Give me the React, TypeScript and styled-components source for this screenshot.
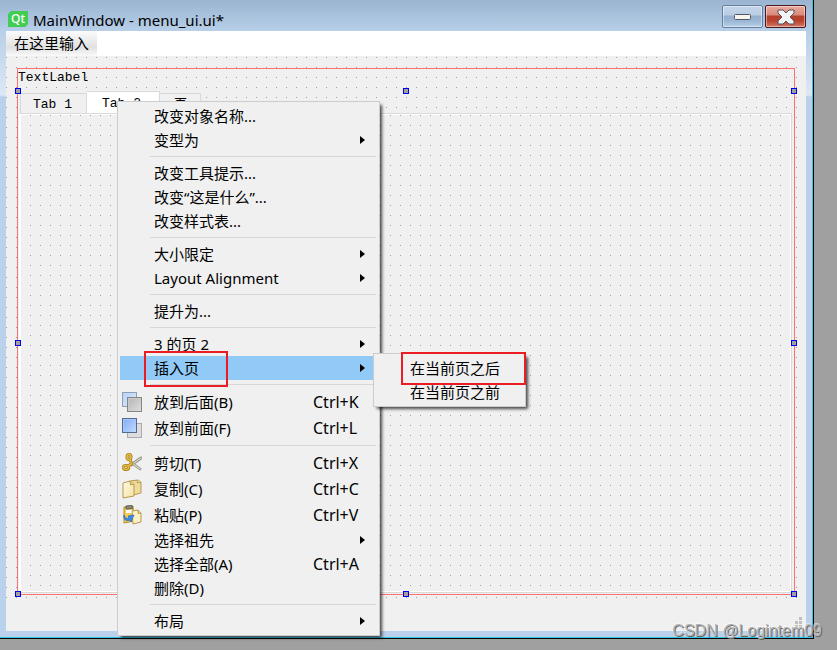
import React from "react";
import styled, { createGlobalStyle, css } from "styled-components";

const Global = createGlobalStyle`
  * { box-sizing: border-box; }
  body { margin: 0; font-family: "Noto Sans", "Noto Sans CJK SC", sans-serif; font-size: 15px; color: #000; }
  button, input { font: inherit; color: inherit; border: 0; padding: 0; margin: 0; background: none; text-align: left; }
`;

const Desktop = styled.div`
  display: flex;
  position: relative;
  min-height: 100vh;
  padding: 0 23px 11px 0;
  background: #a0a0a0;
  overflow: hidden;
`;

const Frame = styled.main`
  flex: 1;
  display: flex;
  flex-direction: column;
  padding: 0 7px 7px 6px;
  border: 1px solid #000;
  border-width: 0 1px 1px 0;
  box-shadow: inset -1px -1px 0 #30c4e8;
  background: linear-gradient(#9ab4d1 0, #b7cfe8 31px, #dce8f5 95px, #b9d1ea 97px);
`;

const TitleBar = styled.header`
  display: flex;
  align-items: flex-start;
  height: 31px;
  padding-top: 5px;
`;

const QtIcon = styled.svg`
  width: 20px;
  height: 16px;
  margin: 6px 5px 0 2px;
`;

const Title = styled.h1`
  flex: 1;
  margin: 3px 0 0;
  font-size: 15px;
  font-weight: 400;
  line-height: 24px;
`;

const WindowButton = styled.button<{ $close?: boolean }>`
  display: grid;
  place-items: center;
  width: 41px;
  height: 23px;
  margin-left: 2px;
  border: 1px solid ${(p) => (p.$close ? "#4a1520" : "#64809f")};
  border-radius: 2px;
  box-shadow: inset 0 0 0 1px rgba(255, 255, 255, 0.45);
  background: ${(p) =>
    p.$close
      ? "linear-gradient(#e9a99c 0, #d98a7c 9px, #b5412c 10px, #b84430 15px, #d47a66 100%)"
      : "linear-gradient(#c3d5e9 0, #b9cde3 9px, #94b0ce 10px, #9bb7d5 15px, #b7d0e9 100%)"};
`;

const MenuBar = styled.nav`
  display: flex;
  height: 25px;
  background: #fff;
`;

const MenuBarItem = styled.button`
  width: 91px;
  padding-left: 8px;
  line-height: 25px;
  background: linear-gradient(#fbfbfb, #e1e1e1 66%, #fafafa);
`;

const dots = (x: number, y: number) => css`
  background-color: #f0f0f0;
  background-image: conic-gradient(from 270deg at 1px 1px, #a0a0a0 90deg, transparent 0);
  background-size: 10px 10px;
  background-position: ${x}px ${y}px;
`;

const Canvas = styled.section`
  flex: 1;
  display: flex;
  flex-direction: column;
  padding: 12px 11px 3px;
  ${dots(0, 1)}
`;

const Selection = styled.div`
  flex: 1;
  display: flex;
  flex-direction: column;
  position: relative;
  border: 1px solid #ff7272;
`;

const Label = styled.div`
  height: 22px;
  font-family: "Liberation Mono", monospace;
  font-size: 13px;
  line-height: 18px;
`;

const Tabs = styled.div`
  display: flex;
  align-items: flex-end;
  height: 22px;
  padding-left: 2px;
`;

const Tab = styled.button<{ $active?: boolean }>`
  height: ${(p) => (p.$active ? 22 : 20)}px;
  padding: ${(p) => (p.$active ? "0 18px 0 15px" : "0 14px 0 12px")};
  border: 1px solid #d9d9d9;
  border-bottom: 0;
  background: ${(p) => (p.$active ? "#fff" : "#f0f0f0")};
  font-family: "Liberation Mono", "Noto Sans CJK SC", monospace;
  font-size: 13px;
  line-height: ${(p) => (p.$active ? 24 : 22)}px;
  & + & { border-left: 0; }
  &:last-child { padding: 0 13px 0 14px; }
`;

const TabPage = styled.div`
  flex: 1;
  margin: 0 2px 1px 1px;
  border: 1px solid #d9d9d9;
  border-left-color: #fff;
  box-shadow: inset 0 0 0 1px #fff;
  ${dots(0, 1)}
`;

const StatusBar = styled.footer`
  display: flex;
  justify-content: flex-end;
  align-items: flex-end;
  height: 33px;
  padding: 3px;
  background: #f0f0f0;
`;

const Handle = styled.i<{ $x: string; $y: string }>`
  position: absolute;
  left: ${(p) => p.$x};
  top: ${(p) => p.$y};
  width: 6px;
  height: 6px;
  margin: -3px;
  background: #a0a0a0;
  border: 1px solid #0000f0;
`;

const Popup = styled.div<{ $x: number; $y: number; $w: number }>`
  position: absolute;
  left: ${(p) => p.$x}px;
  top: ${(p) => p.$y}px;
  width: ${(p) => p.$w}px;
  padding: 2px;
  border: 1px solid #ccc;
  background: #f0f0f0;
  box-shadow: 3px 3px 3px -1px rgba(0, 0, 0, 0.7);
`;

const Item = styled.button<{ $tall?: boolean; $hot?: boolean }>`
  display: grid;
  grid-template-columns: 34px 1fr 64px;
  align-items: center;
  width: 100%;
  height: ${(p) => (p.$tall ? 26 : 24)}px;
  line-height: 24px;
  white-space: nowrap;
  background: ${(p) => (p.$hot ? "#91c9f7" : "transparent")};
`;

const ItemIcon = styled.span`
  display: flex;
  padding-left: 2px;
`;

const Keys = styled.span`
  font-size: 16px;
`;

const Arrow = styled.svg`
  width: 5px;
  height: 8px;
  justify-self: end;
  margin-right: 12px;
`;

const Separator = styled.hr`
  height: 1px;
  margin: 4px 1px 4px 30px;
  border: 0;
  background: #d7d7d7;
`;

const Mark = styled.div<{ $x: number; $y: number; $w: number; $h: number }>`
  position: absolute;
  left: ${(p) => p.$x}px;
  top: ${(p) => p.$y}px;
  width: ${(p) => p.$w}px;
  height: ${(p) => p.$h}px;
  border: 2px solid #ec1c24;
  pointer-events: none;
`;

const Watermark = styled.div`
  position: absolute;
  right: 15px;
  bottom: 7px;
  font-family: "Liberation Sans", sans-serif;
  font-size: 16px;
  line-height: 24px;
  color: #b4b4b4;
  text-shadow: 1px 1px 0 #666, -1px -1px 0 rgba(255, 255, 255, 0.5);
`;

const BackIcon = () => (
  <svg width="20" height="20" viewBox="0 0 20 20">
    <defs>
      <linearGradient id="sky" x2="1" y2="1"><stop stopColor="#b4d2fa" /><stop offset="1" stopColor="#dcebfc" /></linearGradient>
      <linearGradient id="grey" x2="1" y2="1"><stop stopColor="#b4b4b4" /><stop offset="1" stopColor="#dedede" /></linearGradient>
    </defs>
    <rect x=".5" y=".5" width="14" height="14" fill="url(#sky)" stroke="#8c9db4" />
    <rect x="5.5" y="5.5" width="14" height="14" fill="url(#grey)" stroke="#858585" />
    <path d="M6.5 18.5v-12h12" fill="none" stroke="#ccc" />
  </svg>
);

const FrontIcon = () => (
  <svg width="20" height="20" viewBox="0 0 20 20">
    <defs><linearGradient id="blue" x2="1" y2="1"><stop stopColor="#80abf4" /><stop offset="1" stopColor="#c4dcff" /></linearGradient></defs>
    <rect x="5.5" y="5.5" width="14" height="14" fill="#ddd" stroke="#aaa" />
    <rect x=".5" y=".5" width="14" height="14" fill="url(#blue)" stroke="#536a92" />
    <path d="M1.5 13.5v-12h12" fill="none" stroke="#a8c8fb" />
  </svg>
);

const CutIcon = () => (
  <svg width="20" height="20" viewBox="0 0 20 20" fill="none" strokeLinecap="round">
    <path d="m10 10 8 6M9 12l10-7" stroke="#85857a" strokeWidth="2.8" />
    <path d="m10 10 8 6M9 12l10-7" stroke="#dadace" strokeWidth="1.4" />
    <g stroke="#a07c26" strokeWidth="3"><ellipse cx="7" cy="4" rx="2" ry="2.6" /><path d="m8 7 2 4" /><ellipse cx="4" cy="14.5" rx="2.8" ry="2" /><path d="m6 13 3-2" /></g>
    <g stroke="#e6b93c" strokeWidth="1.6"><ellipse cx="7" cy="4" rx="2" ry="2.6" /><path d="m8 7 2 4" /><ellipse cx="4" cy="14.5" rx="2.8" ry="2" /><path d="m6 13 3-2" /></g>
  </svg>
);

const CopyIcon = () => (
  <svg width="20" height="20" viewBox="0 0 20 20" strokeLinejoin="round">
    <defs><linearGradient id="paper" x2="1" y2="1"><stop stopColor="#fffbe5" /><stop offset="1" stopColor="#f3e1a0" /></linearGradient></defs>
    <path d="m8 2 8-1 3 2v11l-8 2z" fill="#efdc9c" stroke="#b89850" />
    <path d="m1 4 7-2 4 3v12L1 19z" fill="url(#paper)" stroke="#b89850" />
    <path d="m8 2 .5 4L12 5" fill="#ead496" stroke="#b89850" />
    <path d="m15 1 .5 3L19 3" fill="#f8ebbe" stroke="#b89850" />
  </svg>
);

const PasteIcon = () => (
  <svg width="20" height="20" viewBox="0 0 20 20" strokeLinejoin="round">
    <path d="m2 2 9-1 1 15-10 2z" fill="#f0cb55" stroke="#b08c30" />
    <path d="m4 1 6-.5.5 3L4 4z" fill="#8b8c80" stroke="#5f6257" />
    <path d="M4 5h6v3H4z" fill="#fff" />
    <path d="m10 6 6-1 3 3v9l-8 2z" fill="#fbf0c2" stroke="#b49858" />
    <path d="m16 5 .3 3.5L19 8" fill="#ead496" stroke="#b49858" />
    <path d="M2 10c-1 4 2 7 6 5l1 2 3-7-6 1 1 2c-2 1-4 0-5-3z" fill="#3b8bed" stroke="#1b5cb8" strokeWidth=".6" />
  </svg>
);

type Entry = { text: string; keys?: string; sub?: boolean; hot?: boolean; tall?: boolean; icon?: React.ReactNode } | null;

const entries: Entry[] = [
  { text: "改变对象名称..." },
  { text: "变型为", sub: true },
  null,
  { text: "改变工具提示..." },
  { text: "改变“这是什么”..." },
  { text: "改变样式表..." },
  null,
  { text: "大小限定", sub: true },
  { text: "Layout Alignment", sub: true },
  null,
  { text: "提升为..." },
  null,
  { text: "3 的页 2", sub: true },
  { text: "插入页", sub: true, hot: true },
  null,
  { text: "放到后面(B)", keys: "Ctrl+K", tall: true, icon: <BackIcon /> },
  { text: "放到前面(F)", keys: "Ctrl+L", tall: true, icon: <FrontIcon /> },
  null,
  { text: "剪切(T)", keys: "Ctrl+X", tall: true, icon: <CutIcon /> },
  { text: "复制(C)", keys: "Ctrl+C", tall: true, icon: <CopyIcon /> },
  { text: "粘贴(P)", keys: "Ctrl+V", tall: true, icon: <PasteIcon /> },
  { text: "选择祖先", sub: true },
  { text: "选择全部(A)", keys: "Ctrl+A" },
  { text: "删除(D)" },
  null,
  { text: "布局", sub: true },
];

const handles = [
  ["0px", "22px"], ["50%", "22px"], ["100%", "22px"],
  ["0px", "calc(50% + 11px)"], ["100%", "calc(50% + 11px)"],
  ["0px", "100%"], ["50%", "100%"], ["100%", "100%"],
];

export default function App() {
  return (
    <Desktop>
      <Global />
      <Frame>
        <TitleBar>
          <QtIcon viewBox="0 0 20 16">
            <path d="M3 0h17v13l-3 3H0V3z" fill="#41cd52" />
            <text x="10" y="12" textAnchor="middle" fontFamily="Noto Sans" fontSize="12" fontWeight="500" fill="#fff">Qt</text>
          </QtIcon>
          <Title>MainWindow - menu_ui.ui*</Title>
          <WindowButton aria-label="Minimize">
            <svg width="17" height="7" viewBox="0 0 17 7"><rect x=".5" y="1.5" width="16" height="5" rx="1" fill="#f5f5ee" stroke="#535666" /></svg>
          </WindowButton>
          <WindowButton $close aria-label="Close">
            <svg width="18" height="16" viewBox="0 0 18 16"><path d="M1 1h5l3 3 3-3h5v3l-4 4 4 4v3h-5l-3-3-3 3H1v-3l4-4-4-4z" fill="#f3f3f3" stroke="#53545f" strokeLinejoin="round" /></svg>
          </WindowButton>
        </TitleBar>
        <MenuBar><MenuBarItem>在这里输入</MenuBarItem></MenuBar>
        <Canvas>
          <Selection>
            <Label>TextLabel</Label>
            <Tabs role="tablist">
              <Tab role="tab">Tab 1</Tab>
              <Tab role="tab" aria-selected $active>Tab 2</Tab>
              <Tab role="tab">页</Tab>
            </Tabs>
            <TabPage role="tabpanel" />
            {handles.map(([x, y]) => <Handle key={x + y} $x={x} $y={y} />)}
          </Selection>
        </Canvas>
        <StatusBar>
          <svg width="8" height="11" viewBox="0 0 8 11" fill="#bfbfbf"><path d="M4 0h3v3H4zM0 4h3v3H0zM4 4h3v3H4zM0 8h3v3H0zM4 8h3v3H4z" /></svg>
        </StatusBar>
      </Frame>
      <Popup role="menu" $x={117} $y={101} $w={263}>
        {entries.map((e, i) =>
          e ? (
            <Item key={i} role="menuitem" $tall={e.tall} $hot={e.hot}>
              <ItemIcon>{e.icon}</ItemIcon>
              <span>{e.text}</span>
              {e.keys && <Keys>{e.keys}</Keys>}
              {e.sub && <Arrow viewBox="0 0 5 8"><path d="M0 0v8l5-4z" /></Arrow>}
            </Item>
          ) : <Separator key={i} />
        )}
      </Popup>
      <Popup role="menu" $x={373} $y={353} $w={153}>
        {["在当前页之后", "在当前页之前"].map((t) => (
          <Item key={t} role="menuitem"><span /><span>{t}</span></Item>
        ))}
      </Popup>
      <Mark $x={144} $y={351} $w={84} $h={36} />
      <Mark $x={401} $y={352} $w={125} $h={33} />
      <Watermark>CSDN @Logintem09</Watermark>
    </Desktop>
  );
}
